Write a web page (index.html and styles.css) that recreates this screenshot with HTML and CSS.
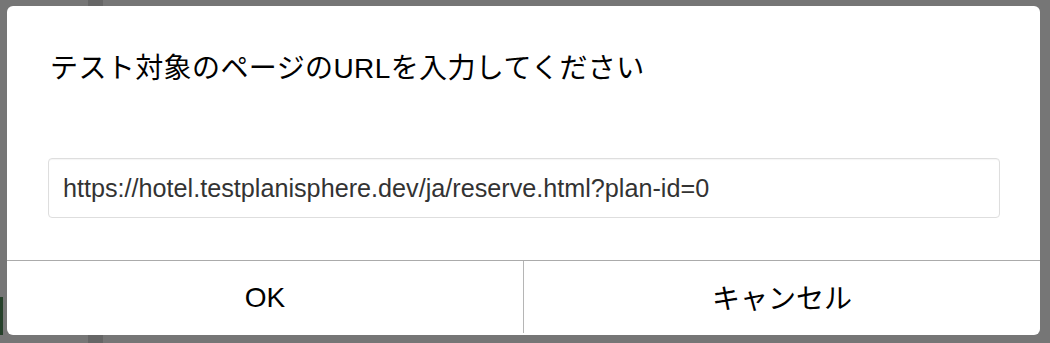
FILE: index.html
```html
<!DOCTYPE html>
<html lang="ja">
<head>
<meta charset="utf-8">
<title>URL入力</title>
<link rel="stylesheet" href="styles.css">
</head>
<body>
<div class="page-mark mark-top"></div>
<div class="page-mark mark-bottom"></div>
<div class="page-mark mark-green"></div>
<div class="backdrop">
  <div class="dialog">
    <div class="dialog-body">
      <p class="dialog-title">テスト対象のページのURLを入力してください</p>
      <div class="url-input">https://hotel.testplanisphere.dev/ja/reserve.html?plan-id=0</div>
    </div>
    <div class="dialog-actions">
      <div class="action">OK</div>
      <div class="action action-cancel">キャンセル</div>
    </div>
  </div>
</div>
</body>
</html>
```

FILE: styles.css
```css
html, body {
  margin: 0;
  padding: 0;
}

body {
  width: 1050px;
  height: 343px;
  background: #767676;
  position: relative;
  overflow: hidden;
  font-family: "Liberation Sans", "Noto Sans CJK JP", sans-serif;
}

.page-mark {
  position: absolute;
}

.mark-top {
  left: 88px;
  top: 0;
  width: 15px;
  height: 6px;
  background: #666666;
}

.mark-bottom {
  left: 88px;
  top: 335px;
  width: 15px;
  height: 8px;
  background: #666666;
}

.mark-green {
  left: 0;
  top: 297px;
  width: 3px;
  height: 38px;
  background: #25402a;
}

.backdrop {
  position: relative;
  padding: 6px 10px 8px 7px;
}

.dialog {
  background: #ffffff;
  border-radius: 6px;
  height: 329px;
  display: flex;
  flex-direction: column;
}

.dialog-body {
  flex: 1;
  padding: 46px 40px 0 41px;
  border-bottom: 1px solid #ababab;
}

.dialog-title {
  margin: 0 0 0 2px;
  font-size: 28px;
  line-height: 34px;
  letter-spacing: 0.4px;
  color: #000000;
}

.url-input {
  margin-top: 72px;
  height: 58px;
  border: 1px solid #dedede;
  border-radius: 4px;
  box-shadow: inset 0 1px 1px rgba(0, 0, 0, 0.04);
  padding: 0 14px;
  display: flex;
  align-items: center;
  font-size: 25.2px;
  color: #333333;
  white-space: nowrap;
}

.dialog-actions {
  height: 74px;
  display: flex;
}

.action {
  flex: 1;
  display: flex;
  align-items: center;
  justify-content: center;
  font-size: 28px;
  color: #000000;
}

.action-cancel {
  border-left: 1px solid #b5b5b5;
  margin-bottom: 2px;
}
```
